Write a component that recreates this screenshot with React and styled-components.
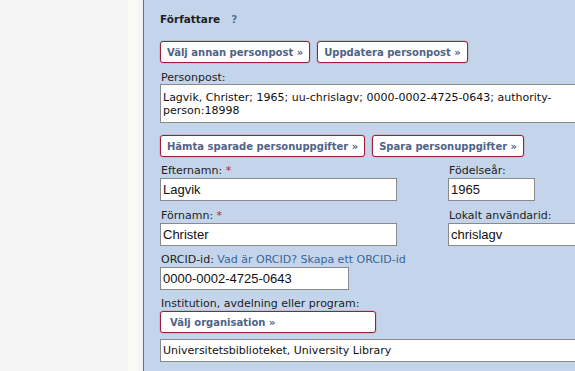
import React from "react";
import styled, { createGlobalStyle } from "styled-components";

const Global = createGlobalStyle`
  html, body { margin: 0; padding: 0; background: #f5f5f5; }
  body { font-family: "DejaVu Sans", Verdana, sans-serif; font-size: 11px; color: #222; }
`;

const Page = styled.div`
  display: flex;
  width: 575px;
  height: 371px;
  overflow: hidden;
`;

const Sidebar = styled.div`
  flex: 0 0 143px;
  background: linear-gradient(
    to right,
    #f5f5f5 128px,
    #fbf9f6 128px,
    #fbf9f6 138px,
    #f5f5f5 138px
  );
`;

const Panel = styled.div`
  flex: 1 0 auto;
  min-width: 0;
  background: #c4d5eb;
  border-left: 1px solid #5e7290;
  padding: 12px 0 0 16px;
  display: flex;
  flex-direction: column;
`;

const Heading = styled.div`
  font-weight: bold;
  font-size: 10.5px;
  line-height: 14px;
  color: #1e1e1e;
  display: flex;
  gap: 11px;
`;

const Help = styled.span`
  color: #5b7096;
`;

const ButtonRow = styled.div`
  display: flex;
  gap: 7px;
  margin-top: ${(p) => p.$mt || 0}px;
`;

const Button = styled.button`
  height: 22px;
  box-sizing: border-box;
  border: 1px solid #9c1f36;
  border-radius: 3px;
  background: #fff;
  font-family: "DejaVu Sans", Verdana, sans-serif;
  font-weight: bold;
  font-size: 10px;
  color: #4f6386;
  padding: 0 6px;
  text-align: left;
  width: ${(p) => (p.$w ? `${p.$w}px` : "auto")};
  padding-left: ${(p) => p.$pl || 6}px;
  box-shadow: 0 0 0 0.5px rgba(156, 31, 54, 0.25);
`;

const Label = styled.div`
  font-size: 11px;
  line-height: ${(p) => p.$lh || 14}px;
  color: #222;
  margin-top: ${(p) => p.$mt || 0}px;
  padding-left: 1px;
  white-space: nowrap;
`;

const Req = styled.span`
  color: #a3243b;
`;

const Link = styled.a`
  color: #3a6699;
  text-decoration: none;
`;

const TextArea = styled.textarea`
  display: block;
  box-sizing: border-box;
  width: 440px;
  height: 39px;
  margin: 0;
  border: 1px solid #8a8a8a;
  background: #fff;
  font-family: "DejaVu Sans", Verdana, sans-serif;
  font-size: 11px;
  line-height: 13px;
  color: #111;
  padding: 6px 3px 3px 2px;
  resize: none;
  overflow: hidden;
`;

const FieldGrid = styled.div`
  display: grid;
  grid-template-columns: 288px 1fr;
  margin-top: ${(p) => p.$mt || 0}px;
`;

const Field = styled.div`
  display: flex;
  flex-direction: column;
  align-items: flex-start;
`;

const Input = styled.input`
  display: block;
  box-sizing: border-box;
  width: ${(p) => p.$w}px;
  height: ${(p) => p.$h || 23}px;
  margin: 0;
  border: 1px solid #8a8a8a;
  background: #fff;
  font-family: ${(p) =>
    p.$small ? `"DejaVu Sans", Verdana, sans-serif` : `"Liberation Sans", Arial, sans-serif`};
  font-size: ${(p) => (p.$small ? 11 : 13)}px;
  color: #111;
  padding: 0 2px;
  outline: none;
`;

const Block = styled.div`
  margin-top: ${(p) => p.$mt || 0}px;
`;

export default function App() {
  return (
    <>
      <Global />
      <Page>
        <Sidebar />
        <Panel>
          <Heading>
            <span>Författare</span>
            <Help>?</Help>
          </Heading>
          <ButtonRow $mt={15}>
            <Button>Välj annan personpost »</Button>
            <Button>Uppdatera personpost »</Button>
          </ButtonRow>
          <Label $mt={8} $lh={13}>Personpost:</Label>
          <TextArea
            readOnly
            value="Lagvik, Christer; 1965; uu-chrislagv; 0000-0002-4725-0643; authority-person:18998"
          />
          <ButtonRow $mt={12}>
            <Button>Hämta sparade personuppgifter »</Button>
            <Button>Spara personuppgifter »</Button>
          </ButtonRow>
          <FieldGrid $mt={7}>
            <Field>
              <Label>
                Efternamn: <Req>*</Req>
              </Label>
              <Input $w={237} readOnly value="Lagvik" />
            </Field>
            <Field>
              <Label>Födelseår:</Label>
              <Input $w={87} readOnly value="1965" />
            </Field>
          </FieldGrid>
          <FieldGrid $mt={8}>
            <Field>
              <Label>
                Förnamn: <Req>*</Req>
              </Label>
              <Input $w={237} readOnly value="Christer" />
            </Field>
            <Field>
              <Label>Lokalt användarid:</Label>
              <Input $w={160} readOnly value="chrislagv" />
            </Field>
          </FieldGrid>
          <Block $mt={7}>
            <Label>
              ORCID-id: <Link href="#">Vad är ORCID?</Link>{" "}
              <Link href="#">Skapa ett ORCID-id</Link>
            </Label>
            <Input $w={189} readOnly value="0000-0002-4725-0643" />
          </Block>
          <Block $mt={7}>
            <Label>Institution, avdelning eller program:</Label>
            <Button $w={216} $pl={9}>
              Välj organisation »
            </Button>
          </Block>
          <Block $mt={6}>
            <Input
              $w={440}
              $h={23}
              $small
              readOnly
              value="Universitetsbiblioteket, University Library"
            />
          </Block>
        </Panel>
      </Page>
    </>
  );
}
